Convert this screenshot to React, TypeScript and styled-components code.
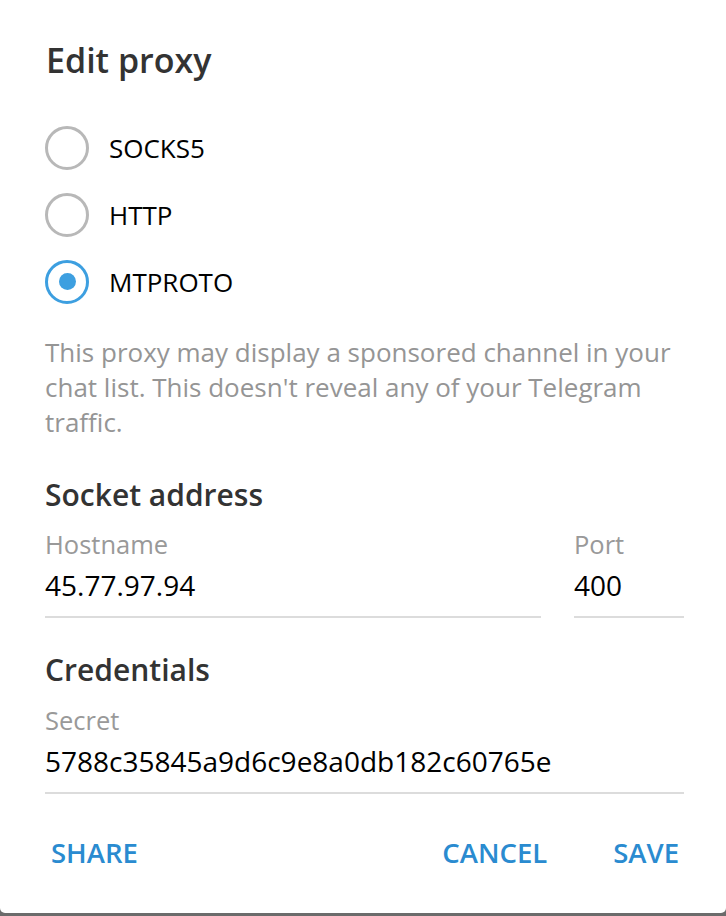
import React from "react";
import styled, { createGlobalStyle } from "styled-components";

const Global = createGlobalStyle`
  html, body { margin: 0; padding: 0; background: #6b6b6b; }
  body { font-family: "Open Sans", "Noto Sans", sans-serif; }
  * { box-sizing: border-box; }
`;

const Dialog = styled.div`
  width: 726px;
  height: 913px;
  background: #fff;
  border-radius: 0 0 5px 5px;
  padding: 0 42px 0 45px;
  display: flex;
  flex-direction: column;
`;

const Title = styled.h1`
  margin: 40px 0 0 1px;
  font-size: 34px;
  line-height: 40px;
  font-weight: 600;
  color: #333;
`;

const RadioList = styled.div`
  margin-top: 34px;
  display: flex;
  flex-direction: column;
`;

const RadioRow = styled.label`
  height: 67px;
  display: flex;
  align-items: center;
  gap: 20px;
  font-size: 26px;
  color: #000;
`;

const RadioCircle = styled.span<{ $checked?: boolean }>`
  width: 44px;
  height: 44px;
  border-radius: 50%;
  border: 3px solid ${(p) => (p.$checked ? "#3d9fe0" : "#b8b8b8")};
  display: flex;
  align-items: center;
  justify-content: center;
  &::after {
    content: "";
    width: 17px;
    height: 17px;
    border-radius: 50%;
    background: ${(p) => (p.$checked ? "#3d9fe0" : "transparent")};
  }
`;

const Description = styled.p`
  margin: 20px 0 0;
  font-size: 26px;
  line-height: 35px;
  color: #959595;
`;

const SectionTitle = styled.h2<{ $mt: number }>`
  margin: ${(p) => p.$mt}px 0 0;
  font-size: 30px;
  line-height: 36px;
  font-weight: 600;
  color: #333;
`;

const FieldRow = styled.div`
  display: flex;
  gap: 33px;
  margin-top: 15px;
`;

const Field = styled.div<{ $grow?: boolean; $w?: number; $mt?: number }>`
  display: flex;
  flex-direction: column;
  ${(p) => (p.$grow ? "flex: 1;" : `width: ${p.$w}px;`)}
  margin-top: ${(p) => p.$mt ?? 0}px;
  border-bottom: 2px solid #dcdcdc;
  padding-bottom: 13px;
`;

const FieldLabel = styled.span`
  font-size: 25.5px;
  line-height: 32px;
  color: #999;
`;

const FieldValue = styled.span`
  margin-top: 7px;
  font-size: 28px;
  line-height: 36px;
  color: #000;
`;

const Buttons = styled.div`
  margin-top: 41px;
  display: flex;
  align-items: center;
  padding: 0 5px 0 6px;
`;

const Button = styled.button<{ $ml?: number }>`
  border: none;
  background: none;
  padding: 0;
  margin-left: ${(p) => p.$ml ?? 0}px;
  font-family: "Open Sans", sans-serif;
  font-size: 27.5px;
  line-height: 36px;
  font-weight: 600;
  color: #2a8bd0;
`;

const Spacer = styled.div`
  flex: 1;
`;

const options = [
  { label: "SOCKS5", checked: false },
  { label: "HTTP", checked: false },
  { label: "MTPROTO", checked: true },
];

export default function App() {
  return (
    <>
      <Global />
      <Dialog>
        <Title>Edit proxy</Title>
        <RadioList>
          {options.map((o) => (
            <RadioRow key={o.label}>
              <RadioCircle $checked={o.checked} />
              {o.label}
            </RadioRow>
          ))}
        </RadioList>
        <Description>
          This proxy may display a sponsored channel in your chat list. This
          doesn't reveal any of your Telegram traffic.
        </Description>
        <SectionTitle $mt={37}>Socket address</SectionTitle>
        <FieldRow>
          <Field $grow>
            <FieldLabel>Hostname</FieldLabel>
            <FieldValue>45.77.97.94</FieldValue>
          </Field>
          <Field $w={110}>
            <FieldLabel>Port</FieldLabel>
            <FieldValue>400</FieldValue>
          </Field>
        </FieldRow>
        <SectionTitle $mt={34}>Credentials</SectionTitle>
        <Field $mt={16}>
          <FieldLabel>Secret</FieldLabel>
          <FieldValue>5788c35845a9d6c9e8a0db182c60765e</FieldValue>
        </Field>
        <Buttons>
          <Button>SHARE</Button>
          <Spacer />
          <Button>CANCEL</Button>
          <Button $ml={66}>SAVE</Button>
        </Buttons>
      </Dialog>
    </>
  );
}
